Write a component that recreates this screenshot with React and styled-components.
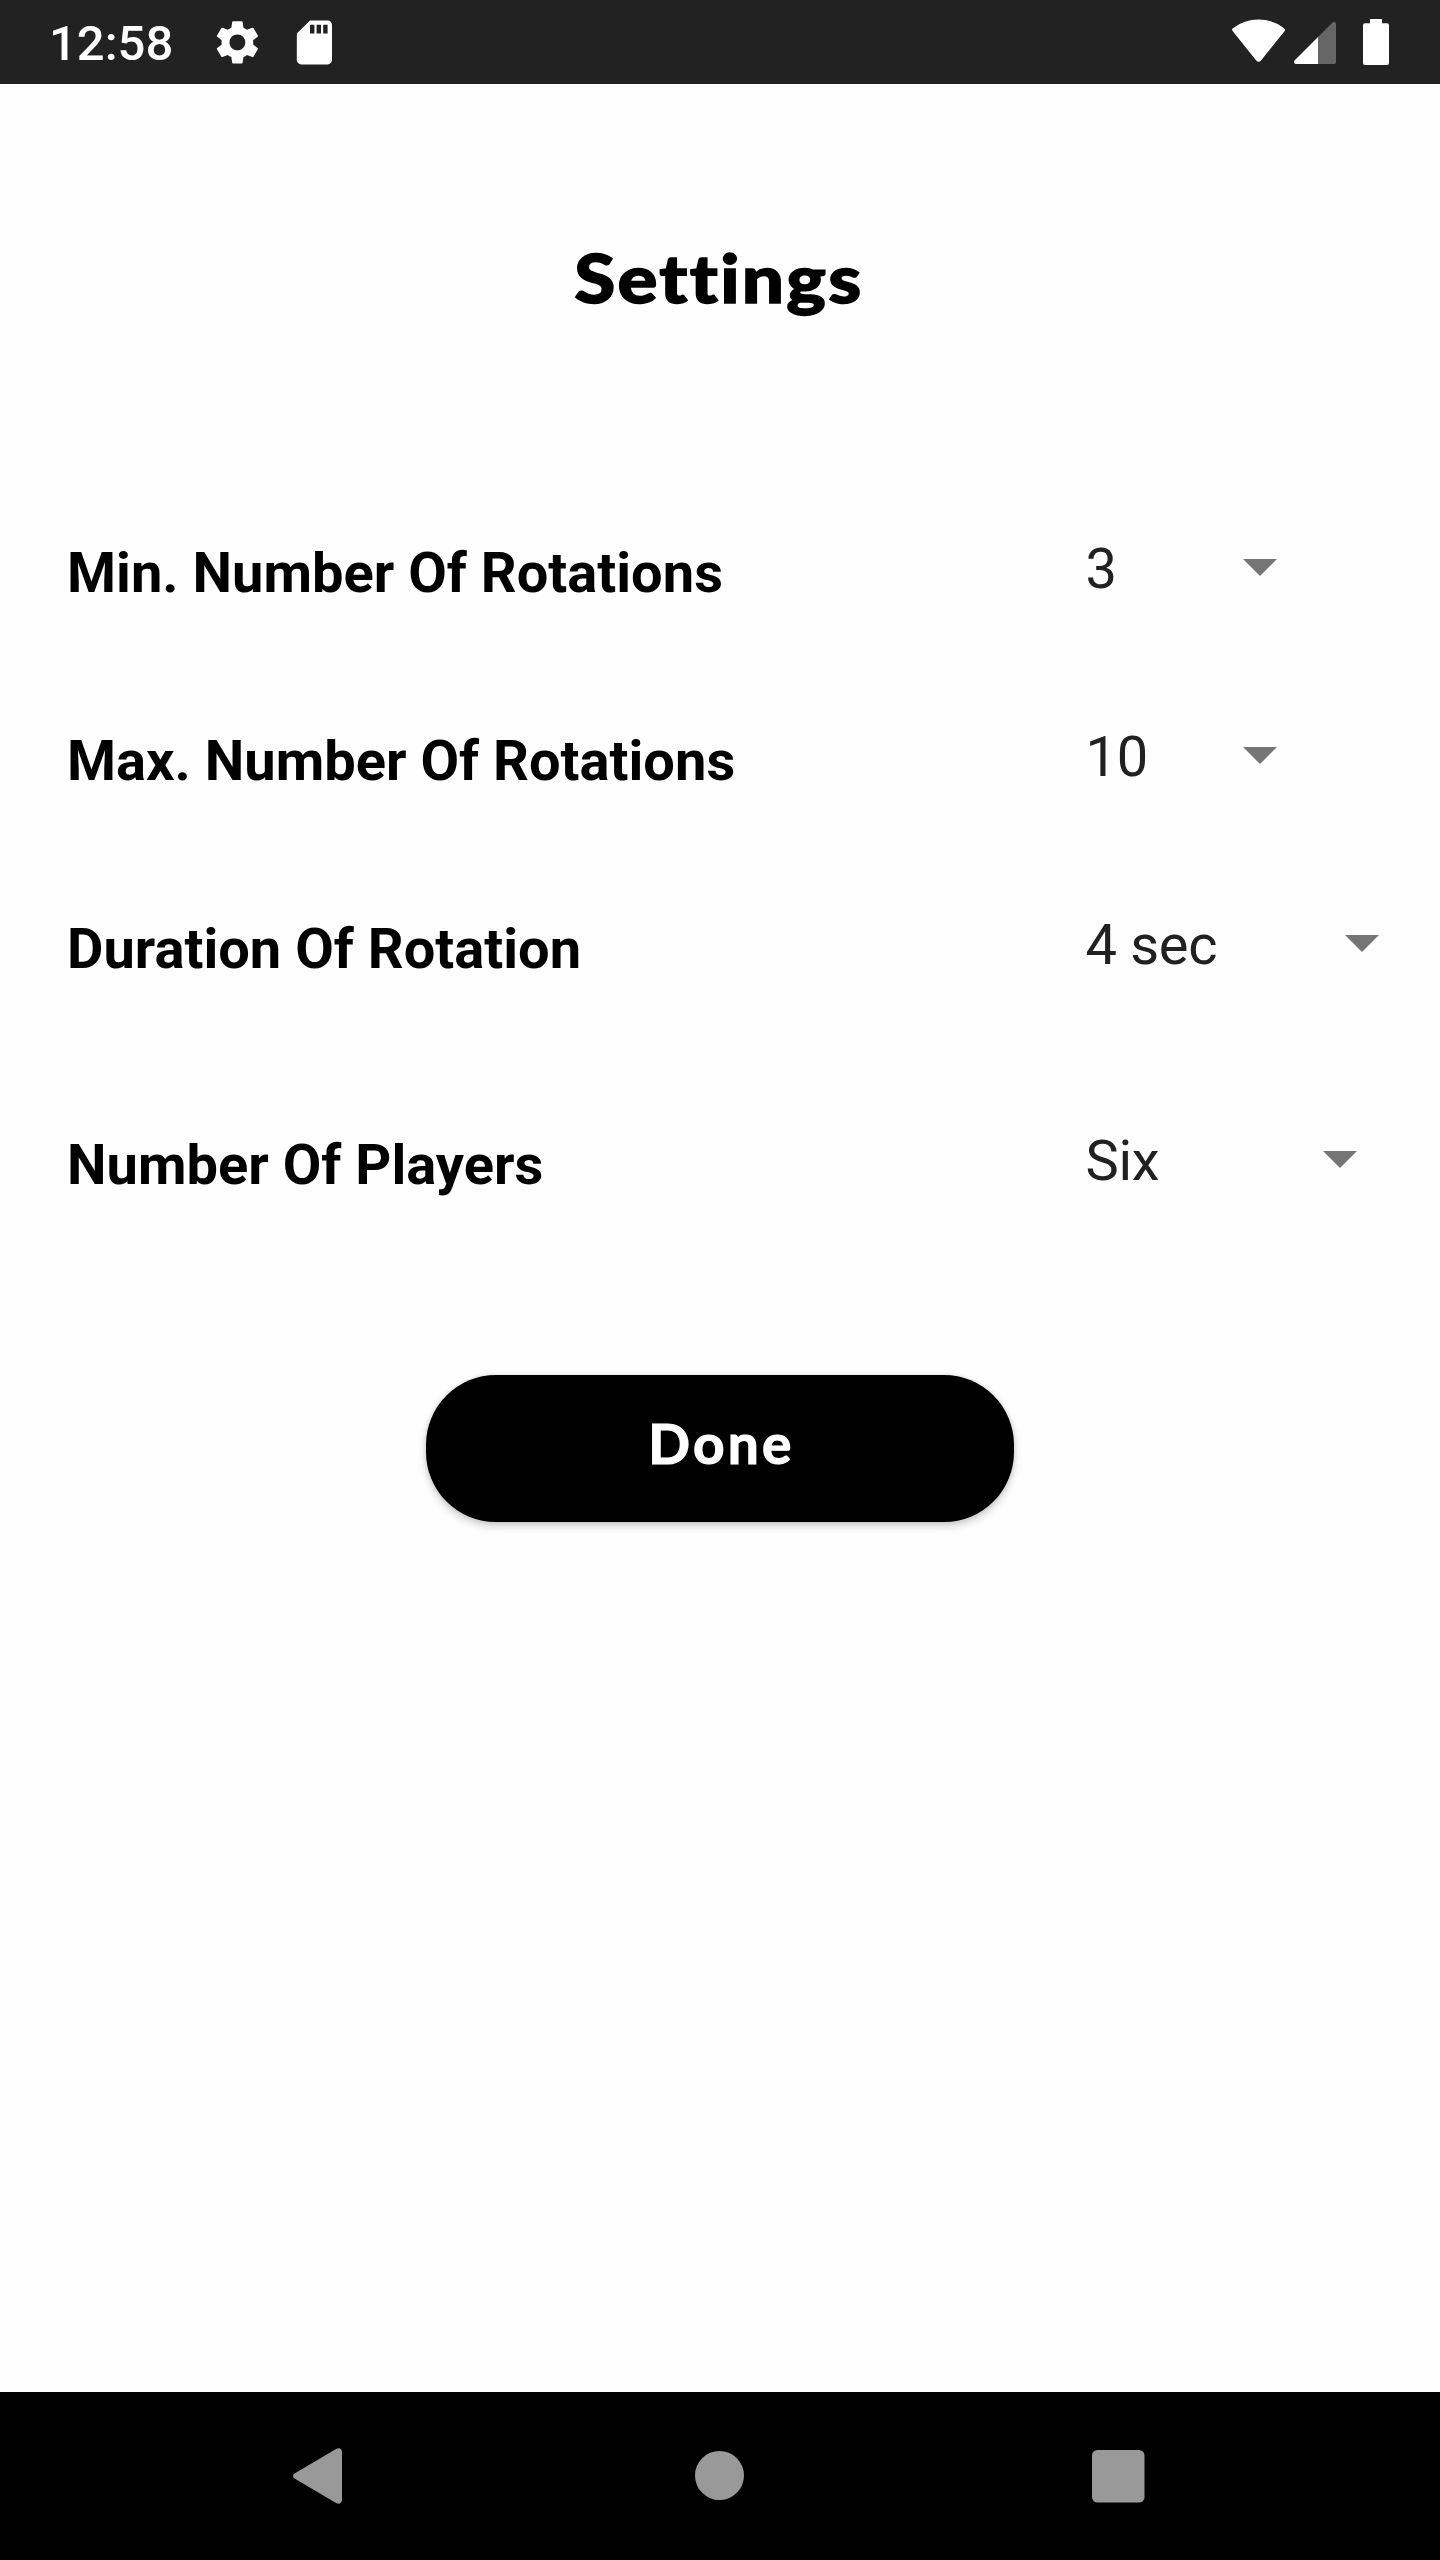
import React from "react";
import styled, { createGlobalStyle } from "styled-components";
import { MdSettings, MdSdCard } from "react-icons/md";

const GlobalStyle = createGlobalStyle`
  * { box-sizing: border-box; }
  body { margin: 0; background: #fefefe; }
  button { border: 0; padding: 0; background: none; font: inherit; color: inherit; }
`;

const Screen = styled.div`
  display: flex;
  flex-direction: column;
  width: 1440px;
  height: 2560px;
  background: #fefefe;
  font-family: Roboto, "Liberation Sans", sans-serif;
`;

const StatusBar = styled.header`
  display: flex;
  align-items: center;
  flex: none;
  height: 84px;
  padding: 0 51px 0 49px;
  background: #222222;
  color: #ffffff;
`;

const Clock = styled.time`
  width: 162px;
  font-size: 49px;
  font-weight: 500;
  line-height: 60px;
  padding-top: 4px;
`;

const Notifications = styled.div`
  display: flex;
  gap: 24px;
  flex: 1;
  svg { display: block; }
`;

const SystemIcons = styled.div`
  display: flex;
  svg { display: block; }
`;

const Content = styled.main`
  display: flex;
  flex-direction: column;
  align-items: center;
  flex: 1;
`;

const Title = styled.h1`
  margin: 146px 0 0;
  height: 102px;
  font-family: Lato, "Open Sans", sans-serif;
  font-size: 66px;
  font-weight: 900;
  line-height: 96px;
  letter-spacing: 2px;
  color: #000000;
  padding-right: 2px;
  transform: scaleX(1.13);
  -webkit-text-stroke: 1.4px #000000;
`;

const SettingsList = styled.section`
  align-self: stretch;
  margin-top: 204px;
  padding-left: 67px;
`;

const SettingRow = styled.div`
  display: flex;
  align-items: flex-start;
  height: ${(p) => p.$height}px;
`;

const Label = styled.span`
  width: 1018.5px;
  padding-top: 4px;
  font-size: 56px;
  font-weight: 700;
  line-height: 66px;
  letter-spacing: 0.02px;
  color: #000000;
`;

const Select = styled.button`
  display: flex;
  align-items: center;
  justify-content: space-between;
  width: ${(p) => p.$width}px;
  height: 66px;
  font-size: 56px;
  line-height: 66px;
  letter-spacing: -0.3px;
  color: #212121;
`;

const Arrow = styled.i`
  width: 34px;
  height: 17px;
  margin-bottom: 3px;
  background: #757575;
  clip-path: polygon(0 0, 100% 0, 50% 100%);
`;

const DoneButton = styled.button`
  width: 588px;
  height: 147px;
  margin-top: 75px;
  padding-bottom: 11px;
  border-radius: 70px;
  background: #000000;
  box-shadow: 0 4px 8px rgba(0, 0, 0, 0.2), 0 0 4px rgba(0, 0, 0, 0.1);
  color: #ffffff;
  font-family: Lato, "Open Sans", sans-serif;
  font-size: 55px;
  font-weight: 700;
  letter-spacing: 3.2px;
  text-indent: 3px;
  -webkit-text-stroke: 1.2px #ffffff;
`;

const NavBar = styled.nav`
  display: flex;
  align-items: center;
  flex: none;
  height: 168px;
  padding: 0 295px 0 293px;
  justify-content: space-between;
  background: #000000;
  svg { display: block; }
`;

const SETTINGS = [
  { label: "Min. Number Of Rotations", value: "3", width: 191.5, height: 188 },
  { label: "Max. Number Of Rotations", value: "10", width: 191.5, height: 188 },
  { label: "Duration Of Rotation", value: "4 sec", width: 293.5, height: 216 },
  { label: "Number Of Players", value: "Six", width: 271.5, height: 172 },
];

export default function App() {
  return (
    <Screen>
      <GlobalStyle />
      <StatusBar>
        <Clock>12:58</Clock>
        <Notifications>
          <MdSettings size={52.8} />
          <MdSdCard size={52.8} />
        </Notifications>
        <SystemIcons>
          <svg width="157" height="84" viewBox="1232 0 157 84">
            <path fill="#fff" d="M1233 31.5Q1231 29.5 1233.3 28Q1244 19.5 1258.5 19.5T1283.7 28Q1286 29.5 1284.3 31.5L1261 60.5Q1258.6 63.2 1256.2 60.5Z" />
            <path fill="#666" d="M1318 37L1332.3 22.8Q1333.2 22 1334 22Q1336 22 1336 24V62Q1336 64 1334 64H1318Z" />
            <path fill="#fff" d="M1318 37V64H1296Q1294 64 1294 61.5Q1294 60.7 1295 60Z" />
            <path fill="#fff" d="M1370 19H1382V23.3H1387Q1389 23.3 1389 25.3V63Q1389 65 1387 65H1365Q1363 65 1363 63V25.3Q1363 23.3 1365 23.3H1370Z" />
          </svg>
        </SystemIcons>
      </StatusBar>
      <Content>
        <Title>Settings</Title>
        <SettingsList>
          {SETTINGS.map((s) => (
            <SettingRow key={s.label} $height={s.height}>
              <Label>{s.label}</Label>
              <Select $width={s.width}>
                {s.value}
                <Arrow />
              </Select>
            </SettingRow>
          ))}
        </SettingsList>
        <DoneButton>Done</DoneButton>
      </Content>
      <NavBar>
        <svg width="49" height="56" viewBox="0 0 49 56">
          <path fill="#999" d="M2 25.3L43 1Q45 0 46.5.3Q49 1 49 4V52Q49 55 46.5 55.8Q45 56 43 55L2 30.8Q0 29.5 0 28Q0 26.5 2 25.3Z" />
        </svg>
        <svg width="53" height="50" viewBox="0 0 53 50">
          <circle cx="28.5" cy="24.5" r="24.5" fill="#999" />
        </svg>
        <svg width="53" height="53" viewBox="0 0 53 53">
          <rect x="0" y="0" width="52.5" height="52.5" rx="5.5" fill="#999" />
        </svg>
      </NavBar>
    </Screen>
  );
}
